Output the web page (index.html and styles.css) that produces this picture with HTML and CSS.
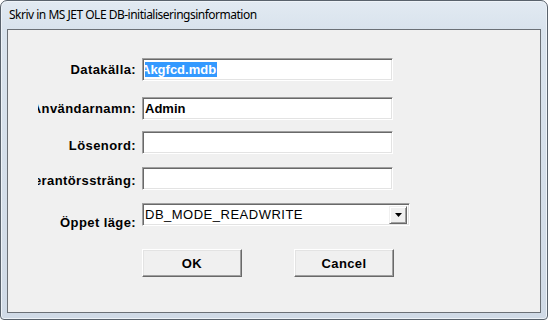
FILE: index.html
```html
<!DOCTYPE html>
<html lang="sv">
  <head>
    <meta charset="UTF-8" />
    <title>Skriv in MS JET OLE DB-initialiseringsinformation</title>
    <link rel="stylesheet" href="styles.css">
  </head>
  <body>
    <div class="window">
      <div class="titlebar">Skriv in MS JET OLE DB-initialiseringsinformation</div>
      <div class="client">
        <form class="form">
          <div class="row row-source">
            <label class="label"><span>Datakälla:</span></label>
            <div class="field">
              <div class="text"><span class="selected">Akgfcd.mdb</span></div>
            </div>
          </div>
          <div class="row row-user">
            <label class="label"><span>Användarnamn:</span></label>
            <div class="field">
              <div class="text">Admin</div>
            </div>
          </div>
          <div class="row row-password">
            <label class="label"><span>Lösenord:</span></label>
            <div class="field">
              <div class="text"></div>
            </div>
          </div>
          <div class="row row-provider">
            <label class="label"><span>Leverantörssträng:</span></label>
            <div class="field">
              <div class="text"></div>
            </div>
          </div>
          <div class="row row-mode">
            <label class="label"><span>Öppet läge:</span></label>
            <div class="field combo">
              <div class="text plain">DB_MODE_READWRITE</div>
              <span class="drop">
                <svg width="7" height="4" viewBox="0 0 7 4"><path d="M0 0h7L3.5 4z" fill="#000"/></svg>
              </span>
            </div>
          </div>
        </form>
        <div class="buttons">
          <button type="button" class="btn">OK</button>
          <button type="button" class="btn">Cancel</button>
        </div>
      </div>
    </div>
  </body>
</html>
```

FILE: styles.css
```css
body {
  margin: 0;
  background: #fff;
}
.window {
  width: 548px;
  height: 320px;
  box-sizing: border-box;
  border: 1px solid #59626c;
  border-radius: 7px 7px 4px 4px;
  background: linear-gradient(180deg, #e2eaf2 0, #d9e3ed 28px, #d0dae6 100%);
  box-shadow: inset 0 0 0 1px #eef3f8;
  display: flex;
  flex-direction: column;
  font-family: "Liberation Sans", Arial, sans-serif;
}
.titlebar {
  height: 28px;
  line-height: 28px;
  padding-left: 8px;
  font-family: "Noto Sans", "Open Sans", sans-serif;
  font-size: 12px;
  letter-spacing: -0.5px;
  color: #000;
}
.client {
  flex: 1;
  margin: 0 6px 6px 6px;
  border: 1px solid #6b7076;
  background: #f0f0f0;
}
.form {
  display: flex;
  flex-direction: column;
  padding: 28px 0 0 30px;
  margin: 0;
}
.row {
  display: grid;
  grid-template-columns: 98px auto;
  column-gap: 6px;
  height: 23px;
}
.label {
  display: flex;
  justify-content: flex-end;
  overflow: hidden;
  white-space: nowrap;
  font-size: 13px;
  font-weight: bold;
  letter-spacing: 0.4px;
  line-height: 15px;
  height: 30px;
}
.row-source .label { padding-top: 4px; }
.row-user { margin-top: 16px; }
.row-user .label { padding-top: 4px; }
.row-password { margin-top: 11px; }
.row-password .label { padding-top: 7px; }
.row-provider { margin-top: 13px; }
.row-provider .label { padding-top: 6px; }
.row-mode { margin-top: 13px; }
.row-mode .label { padding-top: 12px; }

.field {
  width: 251px;
  height: 23px;
  box-sizing: border-box;
  background: #fff;
  border-top: 1px solid #a0a0a0;
  border-left: 1px solid #a0a0a0;
  border-right: 1px solid #fff;
  border-bottom: 1px solid #fff;
  box-shadow: inset 1px 1px 0 #696969, inset -1px -1px 0 #e3e3e3;
  padding: 3px 0 0 2px;
  display: flex;
}
.text {
  overflow: hidden;
  white-space: nowrap;
  flex: 1;
  height: 15px;
  font-size: 13px;
  font-weight: bold;
  line-height: 15px;
  color: #000;
}
.text.plain {
  font-weight: normal;
  letter-spacing: 0.5px;
}
.selected {
  display: inline-block;
  margin-left: -4px;
  padding-right: 1px;
  background: #3399ff;
  color: #fff;
}
.combo {
  width: 268px;
  padding-right: 2px;
}
.drop {
  width: 18px;
  height: 18px;
  margin-top: -1px;
  box-sizing: border-box;
  background: #f0f0f0;
  border-top: 1px solid #f0f0f0;
  border-left: 1px solid #f0f0f0;
  border-right: 1px solid #696969;
  border-bottom: 1px solid #696969;
  box-shadow: inset 1px 1px 0 #fff, inset -1px -1px 0 #a0a0a0;
  display: flex;
  align-items: center;
  justify-content: center;
}
.buttons {
  display: flex;
  gap: 52px;
  padding-left: 134px;
  margin-top: 23px;
}
.btn {
  width: 100px;
  height: 28px;
  box-sizing: border-box;
  background: #f0f0f0;
  border-top: 1px solid #fff;
  border-left: 1px solid #fff;
  border-right: 1px solid #696969;
  border-bottom: 1px solid #696969;
  box-shadow: inset -1px -1px 0 #a0a0a0, inset 1px 1px 0 #e3e3e3;
  font-family: "Liberation Sans", Arial, sans-serif;
  font-size: 13px;
  font-weight: bold;
  letter-spacing: 0.4px;
  color: #000;
  padding: 0;
}
```
